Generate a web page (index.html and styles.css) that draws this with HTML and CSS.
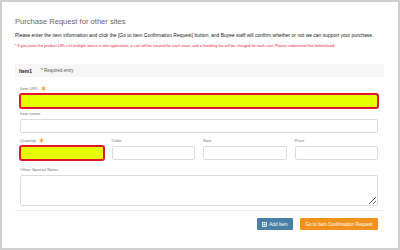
FILE: index.html
```html
<!DOCTYPE html>
<html lang="en">
  <head>
    <meta charset="UTF-8" />
    <title>Purchase Request for other sites</title>
    <link rel="stylesheet" href="styles.css">
  </head>
  <body>
    <div class="page">
      <h1 class="title">Purchase Request for other sites</h1>
      <p class="intro">
        Please enter the item information and click the [Go to Item Confirmation Request] button, and Buyee staff will confirm whether or not we can support your purchase.
      </p>
      <p class="note">
        * If you enter the product URLs of multiple stores in one application, a cart will be created for each store, and a handling fee will be charged for each cart. Please understand this beforehand.
      </p>

      <div class="item-head">
        <span class="item-title">Item1</span>
        <span class="required">* Required entry</span>
      </div>

      <div class="item-body">
        <div class="field field-url">
          <label>Item URL
            <svg class="star" width="5" height="5" viewBox="0 0 10 10">
              <path d="M5 0.5v9M1.1 2.75l7.8 4.5M1.1 7.25l7.8-4.5" stroke="#f29a1f" stroke-width="1.8" />
            </svg>
          </label>
          <input type="text" class="input highlight" />
        </div>
        <div class="field field-name">
          <label>Item name</label>
          <input type="text" class="input" />
        </div>
        <div class="row">
          <div class="field">
            <label>Quantity
              <svg class="star" width="5" height="5" viewBox="0 0 10 10">
                <path d="M5 0.5v9M1.1 2.75l7.8 4.5M1.1 7.25l7.8-4.5" stroke="#f29a1f" stroke-width="1.8" />
              </svg>
            </label>
            <input type="text" class="input highlight" />
          </div>
          <div class="field">
            <label>Color</label>
            <input type="text" class="input" />
          </div>
          <div class="field">
            <label>Size</label>
            <input type="text" class="input" />
          </div>
          <div class="field">
            <label>Price</label>
            <input type="text" class="input" />
          </div>
        </div>
        <div class="field field-notes">
          <label>Other Special Notes</label>
          <textarea class="input notes"></textarea>
        </div>
      </div>

      <div class="actions">
        <button class="btn btn-add">
          <svg width="5" height="5" viewBox="0 0 5 5">
            <rect x="0.5" y="0.5" width="4" height="4" fill="none" stroke="#fff" stroke-width="0.8" />
            <path d="M2.5 1.3v2.4M1.3 2.5h2.4" stroke="#fff" stroke-width="0.7" />
          </svg>
          Add Item
        </button>
        <button class="btn btn-go">Go to Item Confirmation Request</button>
      </div>
    </div>
  </body>
</html>
```

FILE: styles.css
```css
body {
  margin: 0;
  font-family: "Liberation Sans", Arial, sans-serif;
  background: #fff;
}

.page {
  width: 400px;
  height: 250px;
  box-sizing: border-box;
  border: 2px solid #cfcfcf;
  padding: 15px 14px 0 13px;
}

.title {
  margin: 0;
  font-size: 7.6px;
  line-height: 10px;
  font-weight: normal;
  color: #666;
}

.intro {
  margin: 6px 0 0;
  font-size: 4.97px;
  line-height: 6px;
  color: #222;
  white-space: nowrap;
}

.note {
  margin: 4px 0 0;
  font-size: 3.83px;
  line-height: 6px;
  color: #e8203c;
  white-space: nowrap;
}

.item-head {
  margin-top: 15px;
  height: 13px;
  background: #f6f6f6;
  display: flex;
  align-items: center;
  gap: 9px;
  padding-left: 4px;
}

.item-title {
  font-size: 5px;
  font-weight: bold;
  color: #222;
}

.required {
  font-size: 4.5px;
  color: #555;
}

.item-body {
  padding: 0 6px 0 5px;
}

.field label {
  display: flex;
  align-items: center;
  gap: 3px;
  height: 6px;
  font-size: 4.3px;
  line-height: 6px;
  color: #777;
}

.star {
  display: block;
  margin-top: -2px;
}

.input {
  display: block;
  box-sizing: border-box;
  width: 100%;
  height: 14px;
  margin: 2px 0 0;
  padding: 0;
  border: 1px solid #dcdcdc;
  border-radius: 2px;
  background: #fff;
}

.highlight {
  background: #e6ff00;
  border-color: #e3142f;
  box-shadow: 0 0 0 1px #e3142f;
}

.field-url {
  margin-top: 9px;
}

.field-name {
  margin-top: 3px;
}

.row {
  margin-top: 5px;
  display: grid;
  grid-template-columns: repeat(4, 1fr);
  gap: 8px;
}

.field-notes {
  margin-top: 7px;
}

.notes {
  height: 31px;
  resize: vertical;
}

.actions {
  margin-top: 4px;
  border-top: 1px solid #eee;
  padding: 7px 6px 0 0;
  display: flex;
  justify-content: flex-end;
  gap: 7px;
}

.btn {
  height: 12px;
  border: none;
  border-radius: 1px;
  color: #fff;
  font-family: inherit;
  font-size: 4.6px;
  padding: 0;
  display: flex;
  align-items: center;
  justify-content: center;
  gap: 2px;
}

.btn-add {
  width: 36px;
  background: #4b80a6;
}

.btn-go {
  width: 78px;
  background: #f2921c;
}
```
